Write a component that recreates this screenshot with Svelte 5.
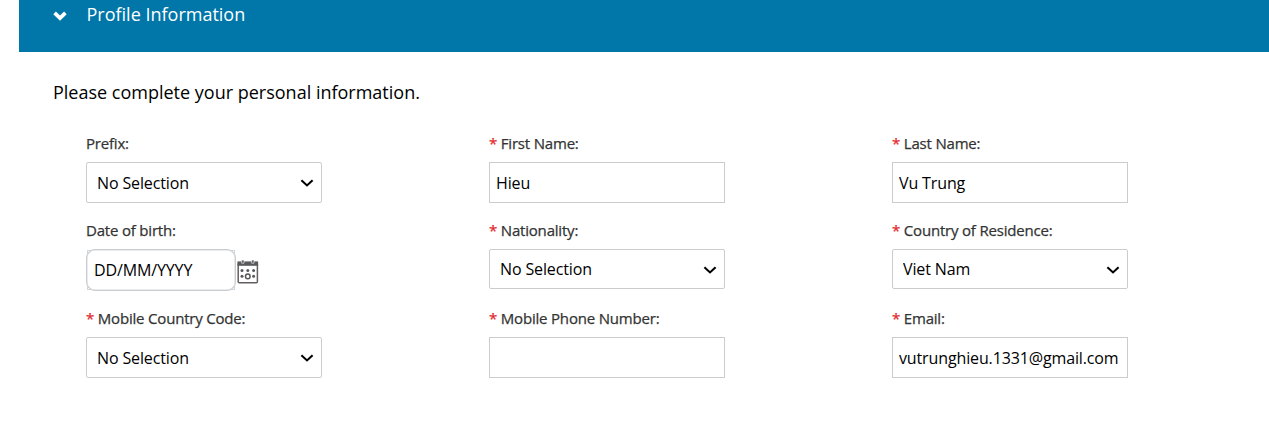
<script lang="ts">
  type Field = {
    id: string;
    label: string;
    kind: 'text' | 'select' | 'date';
    value: string;
    required?: boolean;
  };

  let open = $state(true);

  let fields: Field[] = $state([
    { id: 'prefix', label: 'Prefix', kind: 'select', value: 'No Selection' },
    { id: 'firstName', label: 'First Name', kind: 'text', value: 'Hieu', required: true },
    { id: 'lastName', label: 'Last Name', kind: 'text', value: 'Vu Trung', required: true },
    { id: 'birthDate', label: 'Date of birth', kind: 'date', value: '' },
    { id: 'nationality', label: 'Nationality', kind: 'select', value: 'No Selection', required: true },
    { id: 'country', label: 'Country of Residence', kind: 'select', value: 'Viet Nam', required: true },
    { id: 'countryCode', label: 'Mobile Country Code', kind: 'select', value: 'No Selection', required: true },
    { id: 'phone', label: 'Mobile Phone Number', kind: 'text', value: '', required: true },
    { id: 'email', label: 'Email', kind: 'text', value: 'vutrunghieu.1331@gmail.com', required: true }
  ]);
</script>

<section class="profile">
  <button class="header" aria-expanded={open} onclick={() => (open = !open)}>
    <svg class="toggle" class:closed={!open} width="14" height="10" viewBox="0 0 14 10">
      <path d="M1.6 1.9 L7 7.1 L12.4 1.9" fill="none" stroke="#fff" stroke-width="3.8" />
    </svg>
    <span>Profile Information</span>
  </button>

  {#if open}
    <p class="intro">Please complete your personal information.</p>

    <div class="fields">
      {#each fields as field (field.id)}
        <div class="field">
          <label for={field.id}>
            {#if field.required}<span class="required">*</span>{/if}
            {field.label}:
          </label>

          {#if field.kind === 'select'}
            <div class="select-wrap">
              <select id={field.id} bind:value={field.value}>
                <option>{field.value}</option>
              </select>
              <svg class="arrow" width="14" height="10" viewBox="0 0 14 10">
                <path d="M1.4 2.2 L7 7.4 L12.6 2.2" fill="none" stroke="#000" stroke-width="2.1" />
              </svg>
            </div>
          {:else if field.kind === 'date'}
            <div class="date-row">
              <div class="date-box">
                <input id={field.id} class="date" placeholder="DD/MM/YYYY" bind:value={field.value} />
              </div>
              <button class="calendar" aria-label="Open calendar">
                <svg width="22" height="24" viewBox="0 0 22 24">
                  <rect x="1.2" y="2.7" width="19.2" height="20" rx="1" fill="#fff" stroke="#655f60" stroke-width="1.5" />
                  <path d="M0.5 1.4h20.6v4.4H0.5z" fill="#58595b" />
                  <path d="M4.6 0h2.4v3.2H4.6zM14.6 0h2.4v3.2h-2.4z" fill="#58595b" stroke="#fff" stroke-width="0.6" />
                  <g fill="#58595b">
                    <circle cx="5" cy="10.6" r="1.5" />
                    <circle cx="10.8" cy="10.6" r="1.5" />
                    <circle cx="16.6" cy="10.6" r="1.5" />
                    <circle cx="5" cy="16.2" r="1.5" />
                    <circle cx="16.6" cy="16.2" r="1.5" />
                  </g>
                  <circle cx="10.8" cy="16.4" r="2.3" fill="#fff" stroke="#58595b" stroke-width="1.5" />
                </svg>
              </button>
            </div>
          {:else}
            <input id={field.id} type="text" bind:value={field.value} />
          {/if}
        </div>
      {/each}
    </div>
  {/if}
</section>

<style>
  :global(body) { background: #fff; overflow: hidden; }

  .profile {
    margin-left: 19px;
    font-family: 'Open Sans', sans-serif;
    color: #000;
  }

  .header {
    display: flex;
    align-items: flex-start;
    gap: 19.5px;
    width: 100%;
    height: 52px;
    padding: 2px 0 0 34px;
    border: none;
    background: #0076a9;
    color: #fff;
    font: 18px/24px 'Open Sans', sans-serif;
    text-align: left;
    cursor: pointer;
  }
  .toggle { margin-top: 9px; }
  .toggle.closed { transform: rotate(-90deg); }

  .intro { margin: 28px 0 0 34px; font-size: 18px; line-height: 25px; }

  .fields {
    display: grid;
    grid-template-columns: repeat(3, 236px);
    grid-template-rows: 87px 88px 87px;
    column-gap: 167px;
    margin: 28px 0 0 67px;
  }
  .field { display: flex; flex-direction: column; }
  label {
    height: 29px;
    color: #333;
    font-size: 15px;
    line-height: 20px;
    letter-spacing: -0.19px;
    white-space: nowrap;
    -webkit-text-stroke: 0.25px #333;
  }
  .required { color: #e3292c; -webkit-text-stroke-color: #e3292c; }

  input, select {
    box-sizing: border-box;
    width: 236px;
    height: 41px;
    margin: 0;
    padding: 0 6px;
    border: 1px solid #ccc;
    border-radius: 0;
    background: #fff;
    color: #000;
    font: 16px 'Open Sans', sans-serif;
    letter-spacing: -0.13px;
    outline: none;
  }
  input { display: block; }
  input::placeholder { color: #000; opacity: 1; }

  .select-wrap { position: relative; display: flex; }
  select { appearance: none; padding: 0 30px 0 10px; border-radius: 2px; }
  .field:nth-child(5) select, .field:nth-child(6) select { height: 40px; }
  .arrow { position: absolute; top: 16px; right: 8px; pointer-events: none; }

  .date-row { display: flex; align-items: flex-start; gap: 2px; }
  .date-box { box-sizing: border-box; width: 148px; height: 40px; margin: 1px 0 0 1px; border: 1px solid #d3d6d8; }
  .date {
    width: 150px;
    height: 42px;
    margin: -2px 0 0 -2px;
    padding: 0 7px 1px;
    border: 1px solid #c8cdd0;
    border-radius: 9px;
    box-shadow: inset 0 0 0 0.5px #d3d7da;
  }
  .calendar { display: flex; margin-top: 11px; padding: 0; border: none; background: none; cursor: pointer; }
</style>
